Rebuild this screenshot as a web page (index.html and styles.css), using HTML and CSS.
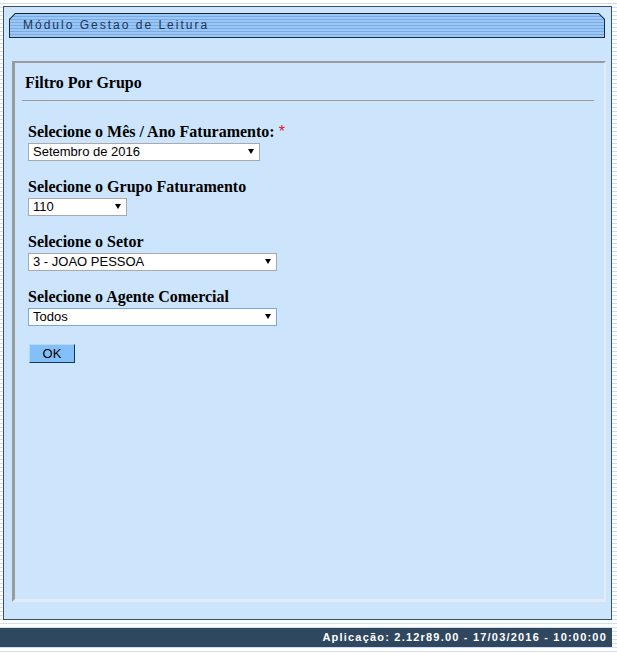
FILE: index.html
```html
<!DOCTYPE html>
<html lang="pt">
<head>
<meta charset="utf-8">
<title>Módulo Gestao de Leitura</title>
<link rel="stylesheet" href="styles.css">
</head>
<body>
<div class="outer">
  <div class="header"><div class="header-in">Módulo Gestao de Leitura</div></div>
  <div class="panel">
    <h2 class="title">Filtro Por Grupo</h2>
    <hr class="rule">
    <form class="form">
      <div class="field">
        <label class="lbl">Selecione o Mês / Ano Faturamento: <span class="req">*</span></label>
        <span class="sel w1"><select><option>Setembro de 2016</option></select></span>
      </div>
      <div class="field">
        <label class="lbl">Selecione o Grupo Faturamento</label>
        <span class="sel w2"><select><option>110</option></select></span>
      </div>
      <div class="field">
        <label class="lbl">Selecione o Setor</label>
        <span class="sel w3"><select><option>3 - JOAO PESSOA</option></select></span>
      </div>
      <div class="field">
        <label class="lbl">Selecione o Agente Comercial</label>
        <span class="sel w3 focus"><select><option>Todos</option></select></span>
      </div>
      <button type="button" class="ok">OK</button>
    </form>
  </div>
</div>
<div class="footer">Aplicação: 2.12r89.00 - 17/03/2016 - 10:00:00</div>
</body>
</html>
```
FILE: styles.css
```css
html {
  background: repeating-linear-gradient(to bottom, #ffffff 0 3px, #cddff0 3px 4px);
  min-height: 100%;
}
body {
  margin: 0;
  font-family: "Liberation Serif", serif;
  color: #000;
}
.outer {
  box-sizing: border-box;
  width: 609px;
  height: 614px;
  margin: 6px 0 0 3px;
  border: 1px solid #3b5165;
  background: #cce5fc;
  padding: 6px 6px 0 5px;
}
.header {
  box-sizing: border-box;
  height: 25px;
  padding: 1px;
  background: #182a3d;
  clip-path: polygon(6px 0, calc(100% - 6px) 0, 100% 6px, 100% 100%, 0 100%, 0 6px);
}
.header-in {
  height: 100%;
  box-sizing: border-box;
  padding-left: 13px;
  background: repeating-linear-gradient(to bottom, #9cc6f4 0 2px, #78ace8 2px 3px);
  clip-path: polygon(5.5px 0, calc(100% - 5.5px) 0, 100% 5.5px, 100% 100%, 0 100%, 0 5.5px);
  font: 12px/22px "Liberation Sans", Arial, sans-serif;
  letter-spacing: 2px;
  color: #1b3557;
}
.panel {
  box-sizing: border-box;
  width: 594px;
  height: 541px;
  margin: 23px 0 0 3px;
  border-style: solid;
  border-width: 2px 2px 3px 3px;
  border-color: #9a9a9a #e3ecf6 #e3ecf6 #9a9a9a;
  padding: 11px 10px 0 7px;
}
.title {
  margin: 0 0 0 3px;
  font: bold 16px/18px "Liberation Serif", serif;
}
.rule {
  margin: 8px 0 0;
  border: 0;
  border-top: 1px solid #9b9b9b;
  height: 0;
}
.form {
  margin: 22px 0 0 6px;
  display: flex;
  flex-direction: column;
  align-items: flex-start;
}
.field {
  display: flex;
  flex-direction: column;
  align-items: flex-start;
  margin-bottom: 18px;
}
.lbl {
  font: bold 16px/18px "Liberation Serif", serif;
}
.req {
  color: #e8141b;
  font-family: "Liberation Sans", sans-serif;
  font-weight: normal;
}
.sel {
  position: relative;
  display: block;
  height: 18px;
  margin-top: 1px;
}
.w1 { width: 232px; }
.w2 { width: 99px; }
.w3 { width: 249px; }
.sel select {
  -webkit-appearance: none;
  appearance: none;
  box-sizing: border-box;
  width: 100%;
  height: 18px;
  margin: 0;
  padding: 0 0 0 4px;
  border: 1px solid #a9a9a9;
  border-radius: 0;
  background: #fff;
  color: #000;
  font: 13px/16px "Liberation Sans", Arial, sans-serif;
  outline: none;
}
.sel.focus select {
  border-color: #7ca7d8;
}
.sel::after {
  content: "";
  position: absolute;
  right: 6px;
  top: 7px;
  border-left: 3.5px solid transparent;
  border-right: 3.5px solid transparent;
  border-top: 5px solid #000;
}
.ok {
  box-sizing: border-box;
  width: 46px;
  height: 19px;
  margin-top: 1px;
  margin-left: 1px;
  padding: 0;
  background: #84c0f8;
  border: 1px solid;
  border-color: #b2d9fd #1c3552 #1c3552 #b2d9fd;
  border-radius: 0;
  font: 13px "Liberation Sans", Arial, sans-serif;
  color: #000;
}
.footer {
  box-sizing: border-box;
  width: 612px;
  height: 19px;
  margin-top: 8px;
  padding-right: 5px;
  background: #2f475f;
  color: #fff;
  font: bold 11px/19px "Liberation Sans", Arial, sans-serif;
  letter-spacing: 1.2px;
  text-align: right;
}
```
